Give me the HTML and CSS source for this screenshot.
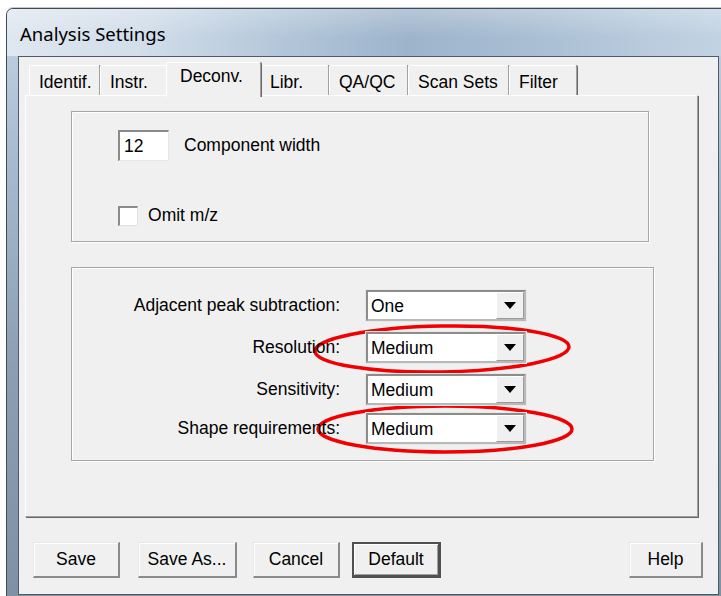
FILE: index.html
```html
<!DOCTYPE html>
<html>
<head>
<meta charset="utf-8">
<title>Analysis Settings</title>
<link rel="stylesheet" href="styles.css">
</head>
<body>
<div class="window">
  <div class="titlebar"><span class="title">Analysis Settings</span></div>
  <div class="client">
    <div class="tabs">
      <div class="tab tab-identif">Identif.</div>
      <div class="tab tab-instr">Instr.</div>
      <div class="tab tab-deconv selected">Deconv.</div>
      <div class="tab tab-libr">Libr.</div>
      <div class="tab tab-qaqc">QA/QC</div>
      <div class="tab tab-scansets">Scan Sets</div>
      <div class="tab tab-filter">Filter</div>
    </div>
    <div class="panel">
      <div class="group group-width">
        <div class="field-row">
          <div class="textbox">12</div>
          <span class="field-label">Component width</span>
        </div>
        <div class="check-row">
          <span class="checkbox"></span>
          <span class="check-label"><u>O</u>mit m/z</span>
        </div>
      </div>
      <div class="group group-params">
        <div class="param-grid">
          <span class="param-label">Adjacent peak subtraction:</span>
          <div class="combo"><span class="combo-value">One</span><span class="combo-btn"><svg width="12" height="7" viewBox="0 0 12 7"><path d="M0 0h12L6 7z" fill="#000"/></svg></span></div>
          <span class="param-label">Resolution:</span>
          <div class="combo"><span class="combo-value">Medium</span><span class="combo-btn"><svg width="12" height="7" viewBox="0 0 12 7"><path d="M0 0h12L6 7z" fill="#000"/></svg></span></div>
          <span class="param-label">Sensitivity:</span>
          <div class="combo"><span class="combo-value">Medium</span><span class="combo-btn"><svg width="12" height="7" viewBox="0 0 12 7"><path d="M0 0h12L6 7z" fill="#000"/></svg></span></div>
          <span class="param-label row-last">Shape requirements:</span>
          <div class="combo row-last"><span class="combo-value">Medium</span><span class="combo-btn"><svg width="12" height="7" viewBox="0 0 12 7"><path d="M0 0h12L6 7z" fill="#000"/></svg></span></div>
        </div>
      </div>
    </div>
    <div class="buttons">
      <button class="btn btn-save">Save</button>
      <button class="btn btn-saveas">Save As...</button>
      <button class="btn btn-cancel">Cancel</button>
      <button class="btn btn-default">Default</button>
      <button class="btn btn-help">Help</button>
    </div>
  </div>
</div>
<svg class="marks" width="721" height="596" viewBox="0 0 721 596">
  <ellipse cx="442" cy="349" rx="127" ry="23" transform="rotate(-1 442 349)" fill="none" stroke="#f00000" stroke-width="3.5"/>
  <ellipse cx="445" cy="429" rx="127" ry="23" fill="none" stroke="#f00000" stroke-width="3.5"/>
</svg>
</body>
</html>
```
FILE: styles.css
```css
html, body {
  margin: 0;
  padding: 0;
}

body {
  position: relative;
  width: 721px;
  height: 596px;
  overflow: hidden;
  background: #fff;
  font-family: "Liberation Sans", Arial, sans-serif;
  font-size: 17.5px;
  color: #000;
}

/* window frame */
.window {
  box-sizing: border-box;
  margin: 8px 0 0 6px;
  width: 730px;
  height: 600px;
  border: 1px solid #3f4a56;
  border-radius: 7px 7px 0 0;
  background: linear-gradient(180deg, #c3d3e3 0%, #a7bbd0 25%, #8b9eb2 60%, #7d90a4 100%);
  box-shadow: 0 -1px 0 #c9c9c9;
}

.titlebar {
  box-sizing: border-box;
  height: 47px;
  padding: 12px 0 0 13px;
  border-radius: 6px 6px 0 0;
  background:
    linear-gradient(180deg, rgba(255,255,255,0.25) 0%, rgba(255,255,255,0) 60%),
    linear-gradient(90deg, #dfe7f0 0%, #d2deea 18%, #b3c6d9 38%, #9db4cb 55%, #a9bed3 72%, #b9cbdd 88%, #c4d4e4 100%);
}

.title {
  font-family: "Noto Sans", "Open Sans", sans-serif;
  font-size: 18.5px;
  line-height: 25px;
  color: #000;
}

/* client area */
.client {
  box-sizing: border-box;
  margin-left: 11px;
  width: 701px;
  height: 539px;
  border: 1px solid #4f5b68;
  background: #f0f0f0;
}

/* tab strip */
.tabs {
  display: flex;
  align-items: flex-end;
  height: 38px;
  padding-left: 10px;
  position: relative;
  z-index: 2;
}

.tab {
  box-sizing: border-box;
  height: 30px;
  padding: 6px 0 0 9px;
  line-height: 20px;
  white-space: nowrap;
  border-top: 1px solid #fff;
  border-left: 1px solid #fff;
  border-right: 1px solid #a0a0a0;
  box-shadow: 1px 0 0 #696969;
  border-radius: 2px 2px 0 0;
  background: #f0f0f0;
}

.tab-identif { width: 71px; }
.tab-instr { width: 68px; }
.tab-deconv { width: 91px; }
.tab-libr { width: 70px; padding-left: 10px; }
.tab-qaqc { width: 79px; }
.tab-scansets { width: 101px; }
.tab-filter { width: 68px; }

.tab.selected {
  height: 35px;
  margin: 0 -2px -2px;
  padding-top: 3px;
  padding-left: 13px;
  width: 95px;
  position: relative;
  z-index: 3;
}

/* tab page */
.panel {
  box-sizing: border-box;
  margin-left: 6px;
  width: 673px;
  height: 422px;
  padding: 15px 0 0 45px;
  border-top: 1px solid #fff;
  border-left: 1px solid #fff;
  border-right: 1px solid #a0a0a0;
  border-bottom: 1px solid #a0a0a0;
  box-shadow: 1px 1px 0 #696969;
  position: relative;
  z-index: 1;
}

.group {
  box-sizing: border-box;
  border: 1px solid #a6a6a6;
  box-shadow: inset 1px 1px 0 #fff, 1px 1px 0 #fff;
}

.group-width {
  width: 578px;
  height: 131px;
  padding: 18px 0 0 46px;
}

.group-params {
  margin-top: 25px;
  width: 583px;
  height: 194px;
  padding-top: 22px;
}

.field-row {
  display: flex;
  align-items: center;
  gap: 15px;
}

.textbox {
  box-sizing: border-box;
  width: 51px;
  height: 31px;
  padding: 4px 0 0 4px;
  line-height: 20px;
  background: #fff;
  border-top: 2px solid #8a8a8a;
  border-left: 2px solid #8a8a8a;
  border-right: 1px solid #e6e6e6;
  border-bottom: 1px solid #e6e6e6;
}

.check-row {
  display: flex;
  align-items: center;
  gap: 10px;
  margin-top: 44px;
}

.check-label u {
  text-decoration: none;
}

.checkbox {
  box-sizing: border-box;
  width: 20px;
  height: 20px;
  background: #fff;
  border-top: 2px solid #8a8a8a;
  border-left: 2px solid #8a8a8a;
  border-right: 1px solid #e3e3e3;
  border-bottom: 1px solid #e3e3e3;
}

.param-grid {
  display: grid;
  grid-template-columns: 268px 160px;
  column-gap: 26px;
  row-gap: 11px;
  align-items: center;
}

.param-label {
  text-align: right;
  white-space: nowrap;
}

.row-last {
  margin-top: -3px;
}

.combo {
  box-sizing: border-box;
  display: flex;
  height: 31px;
  background: #fff;
  border-top: 2px solid #8c8c8c;
  border-left: 2px solid #8c8c8c;
  border-right: 2px solid #b9b9b9;
  border-bottom: 2px solid #b9b9b9;
  box-shadow: 0 0 0 1px #e8e8e8;
}

.combo-value {
  flex: 1;
  padding: 4px 0 0 3px;
  line-height: 20px;
}

.combo-btn {
  box-sizing: border-box;
  width: 28px;
  display: flex;
  align-items: center;
  justify-content: center;
  background: #f0f0f0;
  border-top: 1px solid #fff;
  border-left: 1px solid #fff;
  border-right: 1px solid #9a9a9a;
  border-bottom: 1px solid #9a9a9a;
}

/* command buttons */
.buttons {
  display: flex;
  padding: 25px 15px 0 14px;
}

.btn {
  box-sizing: border-box;
  height: 36px;
  padding: 0;
  font: inherit;
  color: #000;
  background: #f0f0f0;
  border-top: 1px solid #e8e8e8;
  border-left: 1px solid #e8e8e8;
  border-right: 2px solid #8a8a8a;
  border-bottom: 2px solid #8a8a8a;
  box-shadow: inset 1px 1px 0 #fff;
}

.btn-save { width: 87px; margin-right: 18px; }
.btn-saveas { width: 99px; margin-right: 16px; }
.btn-cancel { width: 87px; margin-right: 12px; }
.btn-default {
  width: 89px;
  border: 2px solid #505050;
  border-right-width: 3px;
  border-bottom-width: 3px;
  box-shadow: inset 1px 1px 0 #fff, inset -1px -1px 0 #a0a0a0;
}
.btn-help { width: 74px; margin-left: auto; }

/* red highlight marks drawn over the dialog */
.marks {
  position: absolute;
  left: 0;
  top: 0;
  pointer-events: none;
}
```
